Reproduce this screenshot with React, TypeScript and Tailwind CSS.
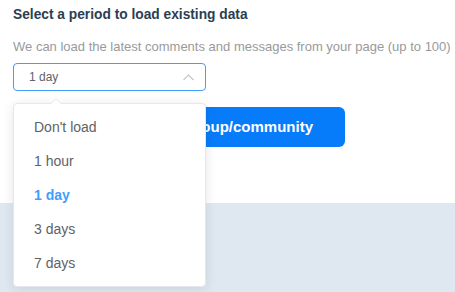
import React from "react";

const items = ["Don't load", "1 hour", "1 day", "3 days", "7 days"];

export default function App() {
  return (
    <div
      className="relative w-[455px] h-[292px] overflow-hidden bg-white"
      style={{ fontFamily: '"Liberation Sans", Arial, Helvetica, sans-serif' }}
    >
      <div className="h-[203px] pl-[13px] pt-[5px] flex flex-col items-start">
        <div className="text-[13.75px] leading-[20px] font-bold text-[#2c3e50]">
          Select a period to load existing data
        </div>
        <div className="mt-[13px] text-[13px] leading-[18px] text-[#9a9a9a] whitespace-nowrap">
          We can load the latest comments and messages from your page (up to 100)
        </div>
        <div className="mt-[7px] w-[193px] h-[28px] rounded-[4px] border border-[#409eff] flex items-center pl-[15px] pr-[11px] justify-between">
          <span className="text-[12px] text-[#606266]">1 day</span>
          <svg width="11" height="7" viewBox="0 0 11 7" fill="none">
            <path d="M0.5 6 L5.5 1 L10.5 6" stroke="#c0c4cc" strokeWidth="1.1" />
          </svg>
        </div>
        <div className="mt-[16px] self-stretch flex justify-center pr-[13px]">
          <div className="w-[235px] h-[40px] rounded-[6px] bg-[#077cfb] flex items-center justify-end pr-[32px] text-white font-bold text-[15px] whitespace-nowrap overflow-hidden">
            Add group/community
          </div>
        </div>
      </div>
      <div className="h-[89px] bg-[#dfe8f1]" />

      <div className="absolute left-[13px] top-[103px] w-[193px] rounded-[4px] border border-[#e4e7ed] bg-white shadow-[0_2px_12px_rgba(0,0,0,0.1)] py-[6px] flex flex-col">
        <div className="absolute -top-[6px] left-[36px] w-0 h-0 border-l-[6px] border-r-[6px] border-b-[6px] border-l-transparent border-r-transparent border-b-[#e4e7ed]" />
        <div className="absolute -top-[5px] left-[36px] w-0 h-0 border-l-[6px] border-r-[6px] border-b-[6px] border-l-transparent border-r-transparent border-b-white" />
        {items.map((it) => (
          <div
            key={it}
            className={
              it === "1 day"
                ? "h-[34px] leading-[34px] pl-[20px] text-[14px] font-bold text-[#409eff]"
                : "h-[34px] leading-[34px] pl-[20px] text-[14px] text-[#606266]"
            }
          >
            {it}
          </div>
        ))}
      </div>
    </div>
  );
}
